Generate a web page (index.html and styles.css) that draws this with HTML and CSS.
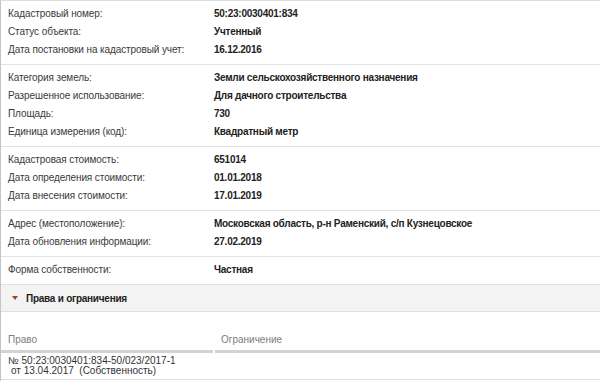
FILE: index.html
```html
<!DOCTYPE html>
<html lang="ru">
<head>
  <meta charset="UTF-8">
  <title>Сведения об объекте</title>
  <link rel="stylesheet" href="styles.css">
</head>
<body>
  <div class="card">
    <div class="group">
      <div class="row"><span class="label">Кадастровый номер:</span><span class="value">50:23:0030401:834</span></div>
      <div class="row"><span class="label">Статус объекта:</span><span class="value">Учтенный</span></div>
      <div class="row"><span class="label">Дата постановки на кадастровый учет:</span><span class="value">16.12.2016</span></div>
    </div>
    <div class="group">
      <div class="row"><span class="label">Категория земель:</span><span class="value">Земли сельскохозяйственного назначения</span></div>
      <div class="row"><span class="label">Разрешенное использование:</span><span class="value">Для дачного строительства</span></div>
      <div class="row"><span class="label">Площадь:</span><span class="value">730</span></div>
      <div class="row"><span class="label">Единица измерения (код):</span><span class="value">Квадратный метр</span></div>
    </div>
    <div class="group">
      <div class="row"><span class="label">Кадастровая стоимость:</span><span class="value">651014</span></div>
      <div class="row"><span class="label">Дата определения стоимости:</span><span class="value">01.01.2018</span></div>
      <div class="row"><span class="label">Дата внесения стоимости:</span><span class="value">17.01.2019</span></div>
    </div>
    <div class="group">
      <div class="row"><span class="label">Адрес (местоположение):</span><span class="value">Московская область, р-н Раменский, с/п Кузнецовское</span></div>
      <div class="row"><span class="label">Дата обновления информации:</span><span class="value">27.02.2019</span></div>
    </div>
    <div class="group">
      <div class="row"><span class="label">Форма собственности:</span><span class="value">Частная</span></div>
    </div>

    <div class="section-head"><span class="caret"></span>Права и ограничения</div>

    <div class="rights">
      <div class="rights-head">
        <div class="col col-right">Право</div>
        <div class="col col-limit">Ограничение</div>
      </div>
      <div class="rights-row">
        <div class="col col-right">
          <span class="line">№ 50:23:0030401:834-50/023/2017-1</span>
          <span class="line indent">от 13.04.2017&nbsp; (Собственность)</span>
        </div>
        <div class="col col-limit"></div>
      </div>
    </div>
  </div>
</body>
</html>
```

FILE: styles.css
```css
* {
  box-sizing: border-box;
  margin: 0;
  padding: 0;
}

body {
  font-family: "Liberation Sans", Arial, sans-serif;
  font-size: 10px;
  color: #333;
  background: #fff;
}

.card {
  border-left: 1px solid #c4c4c4;
  border-top: 1px solid #dcdcdc;
  min-height: 381px;
}

.group {
  padding: 4px 0 5px;
  border-bottom: 1px solid #e2e2e2;
}

.group:last-of-type {
  padding-bottom: 6px;
}

.row {
  display: flex;
  height: 18px;
  line-height: 18px;
}

.label {
  width: 213px;
  padding-left: 7px;
  color: #3a3a3a;
  letter-spacing: -0.1px;
}

.value {
  font-weight: bold;
  color: #222;
  letter-spacing: -0.25px;
}

.section-head {
  display: flex;
  align-items: center;
  height: 27px;
  padding-left: 11px;
  background: #f3f3f3;
  border-bottom: 1px solid #dedede;
  font-weight: bold;
  color: #222;
  letter-spacing: -0.25px;
}

.caret {
  width: 0;
  height: 0;
  border-left: 3px solid transparent;
  border-right: 3px solid transparent;
  border-top: 4px solid #a5402f;
  margin-right: 8px;
}

.rights-head,
.rights-row {
  display: flex;
}

.rights-head .col {
  padding: 22px 7px 4px;
  line-height: 12px;
  color: #7d7d7d;
  border-bottom: 3px solid #d3d3d3;
}

.col-right {
  width: 212px;
  margin-right: 2px;
}

.col-limit {
  flex: 1;
}

.rights-head .col-limit {
  padding-left: 6px;
}

.rights-row {
  border-bottom: 1px solid #dedede;
}

.rights-row .col {
  padding: 3px 0 3px 7px;
  line-height: 10px;
  color: #333;
}

.line {
  display: block;
  white-space: nowrap;
}

.line.indent {
  padding-left: 3px;
}
```
